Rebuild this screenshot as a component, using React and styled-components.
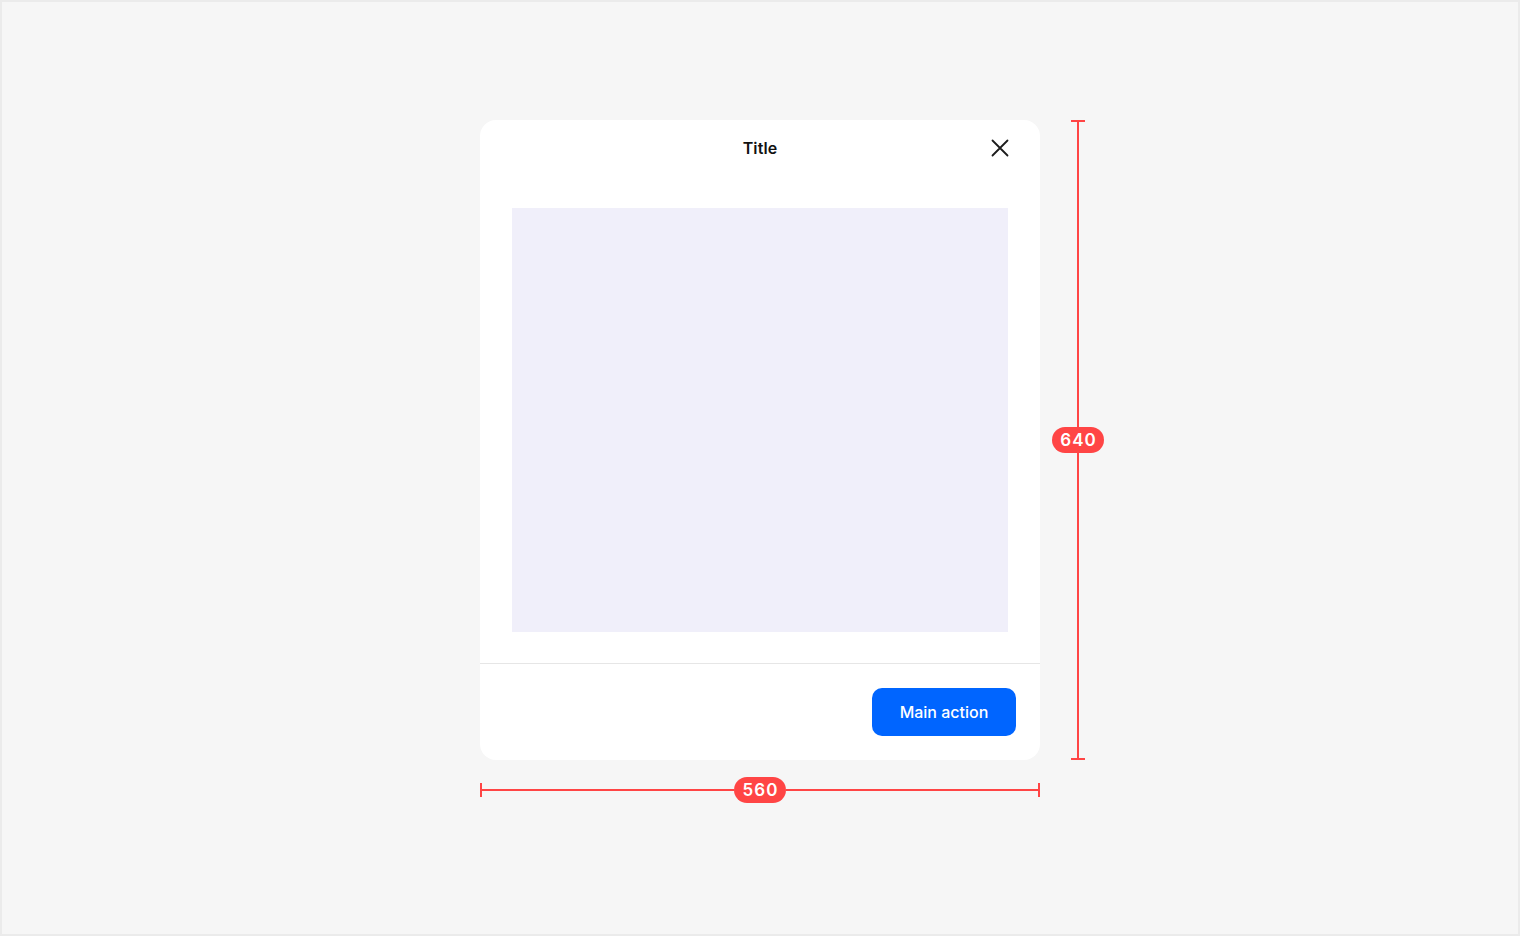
import React from "react";
import styled, { createGlobalStyle } from "styled-components";

const GlobalStyle = createGlobalStyle`
  * { box-sizing: border-box; }
  html, body { margin: 0; padding: 0; }
  body {
    font-family: Inter, "Noto Sans", sans-serif;
    background: #f6f6f6;
    -webkit-font-smoothing: antialiased;
  }
`;

const Page = styled.div`
  width: 1520px;
  height: 936px;
  border: 2px solid #ebebeb;
  background: #f6f6f6;
  display: flex;
  justify-content: center;
  padding-top: 118px;
`;

const Frame = styled.div`
  position: relative;
  width: 560px;
  height: 640px;
`;

const Card = styled.div`
  width: 100%;
  height: 100%;
  background: #ffffff;
  border-radius: 16px;
  display: flex;
  flex-direction: column;
  overflow: hidden;
`;

const Header = styled.div`
  height: 56px;
  display: flex;
  align-items: center;
  justify-content: center;
  position: relative;
`;

const Title = styled.h2`
  margin: 0;
  font-size: 16px;
  font-weight: 600;
  color: #111111;
  letter-spacing: 0.1px;
`;

const CloseButton = styled.button`
  position: absolute;
  right: 28px;
  top: 16px;
  width: 24px;
  height: 24px;
  padding: 0;
  border: 0;
  background: transparent;
  display: flex;
  align-items: center;
  justify-content: center;
  cursor: pointer;
`;

const Body = styled.div`
  flex: 1;
  padding: 32px 32px 31px;
  border-bottom: 1px solid #e6e6e6;
  display: flex;
`;

const Placeholder = styled.div`
  flex: 1;
  background: #f0effa;
`;

const Footer = styled.div`
  height: 96px;
  padding: 24px;
  display: flex;
  justify-content: flex-end;
  align-items: center;
`;

const PrimaryButton = styled.button`
  width: 144px;
  height: 48px;
  border: 0;
  border-radius: 10px;
  background: #0065ff;
  color: #ffffff;
  font-family: Inter, "Noto Sans", sans-serif;
  font-size: 16px;
  font-weight: 500;
  cursor: pointer;
`;

const Ruler = styled.div`
  position: absolute;
  display: flex;
  align-items: center;
  justify-content: center;
  ${(p) =>
    p.$vertical
      ? `top: 0; bottom: 0; left: 591px; width: 14px; flex-direction: column;`
      : `left: 0; right: 0; top: 663px; height: 14px;`}
`;

const Tick = styled.span`
  background: #ff4545;
  flex: none;
  ${(p) => (p.$vertical ? `width: 14px; height: 2px;` : `width: 2px; height: 14px;`)}
`;

const Line = styled.span`
  flex: 1;
  background: #ff4545;
  ${(p) => (p.$vertical ? `width: 2px;` : `height: 2px;`)}
`;

const Badge = styled.span`
  flex: none;
  background: #ff4545;
  color: #ffffff;
  font-size: 17px;
  font-weight: 600;
  letter-spacing: 1px;
  height: 26px;
  padding: 0 7px 0 8px;
  border-radius: 13px;
  display: flex;
  align-items: center;
  justify-content: center;
  min-width: 52px;
`;

const Measure = ({ vertical, value }) => (
  <Ruler $vertical={vertical}>
    <Tick $vertical={vertical} />
    <Line $vertical={vertical} />
    <Badge>{value}</Badge>
    <Line $vertical={vertical} />
    <Tick $vertical={vertical} />
  </Ruler>
);

const CloseIcon = () => (
  <svg width="18" height="18" viewBox="0 0 18 18" fill="none">
    <path d="M1.5 1.5L16.5 16.5M16.5 1.5L1.5 16.5" stroke="#1c1c1c" strokeWidth="1.8" strokeLinecap="round" />
  </svg>
);

export default function App() {
  return (
    <>
      <GlobalStyle />
      <Page>
        <Frame>
          <Card>
            <Header>
              <Title>Title</Title>
              <CloseButton aria-label="Close">
                <CloseIcon />
              </CloseButton>
            </Header>
            <Body>
              <Placeholder />
            </Body>
            <Footer>
              <PrimaryButton>Main action</PrimaryButton>
            </Footer>
          </Card>
          <Measure vertical value="640" />
          <Measure value="560" />
        </Frame>
      </Page>
    </>
  );
}
